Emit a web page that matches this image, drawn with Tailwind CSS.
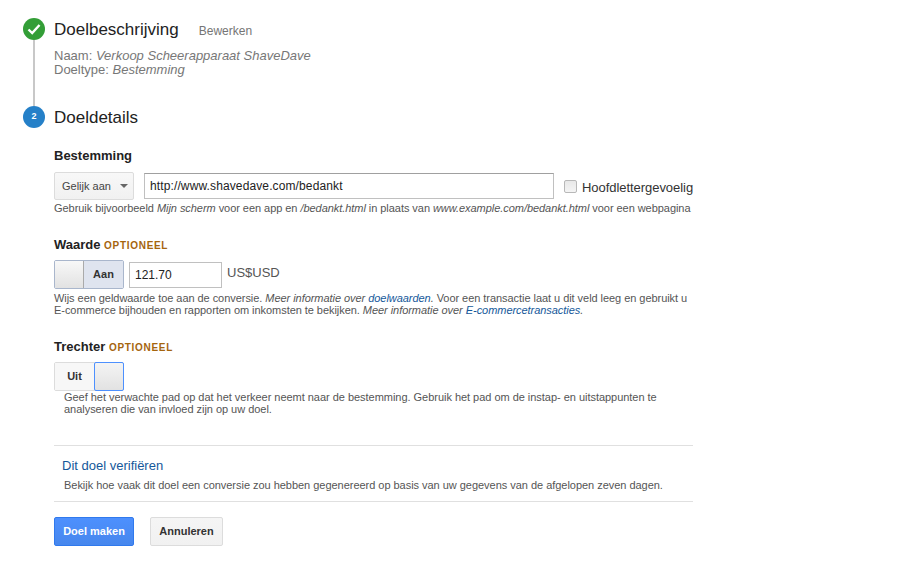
<!DOCTYPE html>
<html lang="nl">
<head>
  <meta charset="UTF-8">
  <title>Doeldetails</title>
  <script src="https://cdn.jsdelivr.net/npm/@tailwindcss/browser@4"></script>
</head>
<body class="bg-white font-['Liberation_Sans',Arial,sans-serif] text-[#444] h-[571px] overflow-hidden">
  <div class="pl-[23px] pt-[18px] w-[693px] box-content">

    <!-- Stap 1 -->
    <div class="flex gap-[9px] h-[88px]">
      <div class="flex flex-col items-center w-[22px] shrink-0">
        <div class="w-[22px] h-[22px] rounded-full bg-[#339e37] flex items-center justify-center shrink-0">
          <svg width="14" height="12" viewBox="0 0 14 12"><path d="M1.5 6.5 L5.2 10 L12.5 2" fill="none" stroke="#fff" stroke-width="2.4"/></svg>
        </div>
        <div class="w-[2px] grow bg-[#c8c8c8]"></div>
      </div>
      <div>
        <div class="flex items-start h-[23px]">
          <h2 class="mt-[1px] text-[17px] leading-[22px] text-[#222]">Doelbeschrijving</h2>
          <span class="ml-[20px] mt-[5px] text-[12px] leading-[16px] text-[#757575]">Bewerken</span>
        </div>
        <div class="mt-[8px] text-[13px] leading-[14px] text-[#777]">
          <div>Naam: <i>Verkoop Scheerapparaat ShaveDave</i></div>
          <div>Doeltype: <i>Bestemming</i></div>
        </div>
      </div>
    </div>

    <!-- Stap 2 -->
    <div class="flex gap-[9px] items-start h-[22px]">
      <div class="w-[22px] h-[22px] rounded-full bg-[#2580c8] text-white text-[9px] font-bold flex items-center justify-center">2</div>
      <h2 class="mt-[1px] text-[17px] leading-[22px] text-[#222]">Doeldetails</h2>
    </div>

    <div class="ml-[31px] w-[639px]">
      <!-- Bestemming -->
      <h3 class="mt-[20px] text-[13px] leading-[16px] font-bold text-[#222]">Bestemming</h3>
      <div class="mt-[8px] flex items-center h-[28px]">
        <div class="w-[80px] shrink-0 h-[28px] border border-[#dcdcdc] rounded-[2px] bg-gradient-to-b from-[#f8f8f8] to-[#f1f1f1] flex items-center pl-[7px] text-[11px] text-[#444]">
          Gelijk aan
          <span class="ml-[9px] w-0 h-0 border-x-[4px] border-x-transparent border-t-[4px] border-t-[#666]"></span>
        </div>
        <input type="text" value="http://www.shavedave.com/bedankt" class="ml-[10px] shrink-0 w-[410px] h-[26px] border border-[#c0c0c0] border-t-[#a0a0a0] pl-[5px] text-[12px] tracking-[0.12px] text-[#222] outline-none">
        <input type="checkbox" class="ml-[10px] shrink-0 w-[13px] h-[13px] appearance-none border border-[#b8b8b8] rounded-[2px] bg-gradient-to-b from-[#e8e8e8] to-[#f4f4f4]">
        <label class="ml-[5px] mt-[4px] text-[13px] tracking-[-0.05px] text-[#333] whitespace-nowrap">Hoofdlettergevoelig</label>
      </div>
      <p class="mt-[2px] text-[11px] leading-[13px] tracking-[-0.05px] text-[#555] whitespace-nowrap">Gebruik bijvoorbeeld <i>Mijn scherm</i> voor een app en <i>/bedankt.html</i> in plaats van <i>www.example.com/bedankt.html</i> voor een webpagina</p>

      <!-- Waarde -->
      <h3 class="mt-[22px] text-[13px] leading-[16px] font-bold text-[#222]">Waarde <span class="text-[10px] text-[#a5650e] tracking-[0.7px]">OPTIONEEL</span></h3>
      <div class="mt-[6px] flex items-center h-[29px]">
        <div class="w-[70px] h-[29px] flex border border-[#a9b6cc] rounded-[2px] overflow-hidden">
          <div class="w-[29px] bg-gradient-to-b from-[#f8f8f8] to-[#e2e2e2] border-r border-[#aaa]"></div>
          <div class="grow bg-[#dfe4ef] flex items-center justify-center text-[11px] font-bold text-[#333]">Aan</div>
        </div>
        <input type="text" value="121.70" class="ml-[5px] w-[93px] h-[26px] border border-[#c0c0c0] px-[5px] text-[12px] text-[#222] outline-none">
        <span class="ml-[5px] mb-[3px] text-[13px] text-[#555]">US$USD</span>
      </div>
      <p class="mt-[3px] text-[11px] leading-[12px] tracking-[-0.05px] text-[#555] whitespace-nowrap">Wijs een geldwaarde toe aan de conversie. <i>Meer informatie over <a class="text-[#15589a]">doelwaarden</a>.</i> Voor een transactie laat u dit veld leeg en gebruikt u<br>E-commerce bijhouden en rapporten om inkomsten te bekijken. <i>Meer informatie over <a class="text-[#15589a]">E-commercetransacties</a>.</i></p>

      <!-- Trechter -->
      <h3 class="mt-[23px] text-[13px] leading-[16px] font-bold text-[#222]">Trechter <span class="text-[10px] text-[#a5650e] tracking-[0.7px]">OPTIONEEL</span></h3>
      <div class="mt-[6px] w-[70px] h-[29px] flex border border-[#dcdcdc] rounded-[2px]">
        <div class="w-[39px] bg-[#f7f7f7] flex items-center justify-center text-[11px] font-bold text-[#333]">Uit</div>
        <div class="grow -my-px -mr-px border border-[#4d90fe] rounded-[2px] bg-gradient-to-b from-[#f4f4f4] to-[#e2e2e2]"></div>
      </div>
      <p class="ml-[10px] text-[11px] leading-[12px] tracking-[-0.03px] text-[#555] whitespace-nowrap">Geef het verwachte pad op dat het verkeer neemt naar de bestemming. Gebruik het pad om de instap- en uitstappunten te<br>analyseren die van invloed zijn op uw doel.</p>

      <!-- Verifiëren -->
      <div class="mt-[30px] h-[57px] border-y border-[#e0e0e0] pl-[8px]">
        <div class="mt-[12px] text-[13px] leading-[16px] text-[#15589a]">Dit doel verifiëren</div>
        <p class="mt-[5px] ml-[2px] text-[11px] leading-[13px] tracking-[-0.03px] text-[#555] whitespace-nowrap">Bekijk hoe vaak dit doel een conversie zou hebben gegenereerd op basis van uw gegevens van de afgelopen zeven dagen.</p>
      </div>

      <!-- Knoppen -->
      <div class="mt-[15px] flex gap-[16px]">
        <button class="w-[80px] h-[29px] rounded-[2px] border border-[#3079ed] bg-gradient-to-b from-[#4d90fe] to-[#4787ed] text-white text-[11px] font-bold">Doel maken</button>
        <button class="w-[73px] h-[29px] rounded-[2px] border border-[#dcdcdc] bg-gradient-to-b from-[#f5f5f5] to-[#f1f1f1] text-[#333] text-[11px] font-bold">Annuleren</button>
      </div>
    </div>
  </div>
</body>
</html>
